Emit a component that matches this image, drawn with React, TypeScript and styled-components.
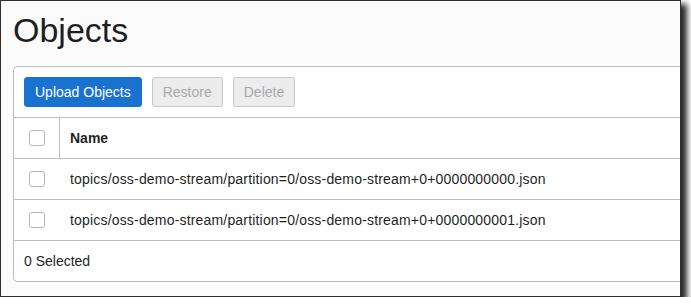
import React from "react";
import styled, { createGlobalStyle } from "styled-components";

const Global = createGlobalStyle`
  html, body { margin: 0; padding: 0; background: #ffffff; }
  body { font-family: "Liberation Sans", Arial, Helvetica, sans-serif; }
`;

const Window = styled.div`
  box-sizing: border-box;
  width: 681px;
  height: 297px;
  border: 1px solid #2e2e2e;
  background: #fbfbfb;
  overflow: hidden;
  box-shadow: 5px 5px 6px 1px rgba(0, 0, 0, 0.85);
  display: flex;
  flex-direction: column;
  padding: 9px 0 0 12px;
`;

const Title = styled.h1`
  margin: 0;
  font-size: 34px;
  line-height: 40px;
  font-weight: 400;
  color: #1f1f1f;
`;

const Card = styled.div`
  box-sizing: border-box;
  margin-top: 16px;
  width: 720px;
  background: #ffffff;
  border: 1px solid #b9bec4;
  border-radius: 4px;
  display: flex;
  flex-direction: column;
`;

const Toolbar = styled.div`
  display: flex;
  align-items: center;
  gap: 10px;
  padding: 10px;
  border-bottom: 1px solid #b9bec4;
`;

const Button = styled.button<{ $primary?: boolean }>`
  box-sizing: border-box;
  height: 30px;
  padding: 0 10px;
  font-family: inherit;
  font-size: 14px;
  border-radius: 3px;
  border: 1px solid ${(p) => (p.$primary ? "#1a72d0" : "#c6c8cb")};
  background: ${(p) => (p.$primary ? "#1a72d0" : "#ececec")};
  color: ${(p) => (p.$primary ? "#ffffff" : "#a7a9ac")};
  cursor: ${(p) => (p.$primary ? "pointer" : "default")};
`;

const Row = styled.div`
  display: flex;
  height: 40px;
  border-bottom: 1px solid #b9bec4;
  align-items: stretch;
`;

const CheckCell = styled.div<{ $divider?: boolean }>`
  width: 46px;
  display: flex;
  align-items: center;
  padding-left: 15px;
  box-sizing: border-box;
  border-right: 1px solid ${(p) => (p.$divider ? "#b9bec4" : "transparent")};
`;

const Box = styled.span`
  box-sizing: border-box;
  width: 16px;
  height: 16px;
  border: 1px solid #b3b8be;
  border-radius: 3px;
  background: #ffffff;
`;

const NameCell = styled.div<{ $header?: boolean }>`
  display: flex;
  align-items: center;
  padding-left: 10px;
  font-size: 14px;
  color: #1f1f1f;
  letter-spacing: ${(p) => (p.$header ? "0" : "0.18px")};
  font-weight: ${(p) => (p.$header ? 700 : 400)};
`;

const Footer = styled.div`
  height: 40px;
  display: flex;
  align-items: center;
  padding-left: 10px;
  font-size: 14px;
  color: #1f1f1f;
`;

const files = [
  "topics/oss-demo-stream/partition=0/oss-demo-stream+0+0000000000.json",
  "topics/oss-demo-stream/partition=0/oss-demo-stream+0+0000000001.json",
];

export default function App() {
  return (
    <>
      <Global />
      <Window>
        <Title>Objects</Title>
        <Card>
          <Toolbar>
            <Button $primary>Upload Objects</Button>
            <Button disabled>Restore</Button>
            <Button disabled>Delete</Button>
          </Toolbar>
          <Row>
            <CheckCell $divider>
              <Box />
            </CheckCell>
            <NameCell $header>Name</NameCell>
          </Row>
          {files.map((f) => (
            <Row key={f}>
              <CheckCell>
                <Box />
              </CheckCell>
              <NameCell>{f}</NameCell>
            </Row>
          ))}
          <Footer>0 Selected</Footer>
        </Card>
      </Window>
    </>
  );
}
